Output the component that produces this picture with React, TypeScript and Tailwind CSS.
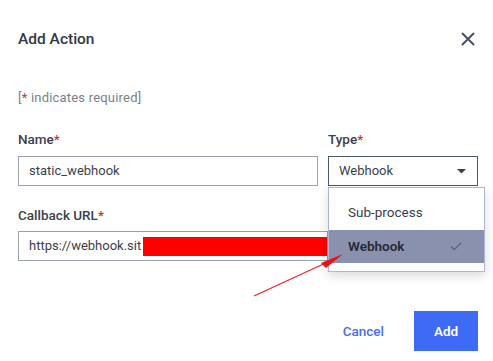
import React from "react";

export default function App() {
  const font = { fontFamily: "Roboto, 'Noto Sans', sans-serif" };
  return (
    <div className="relative w-[493px] h-[361px] bg-white overflow-hidden" style={font}>
      <div className="flex flex-col pl-[18px] pr-[15px] pt-[28px]">
        <div className="flex items-center justify-between h-[22px]">
          <div className="text-[15.5px] font-medium text-[#343846] leading-[22px]">Add Action</div>
          <svg width="14" height="14" viewBox="0 0 14 14" className="mr-[3px]">
            <path d="M1.5 1.5 L12.5 12.5 M12.5 1.5 L1.5 12.5" stroke="#4a5068" strokeWidth="2" strokeLinecap="round" />
          </svg>
        </div>
        <div className="mt-[39px] text-[13px] leading-[18px] text-[#7b7f8a] tracking-[0.2px]">
          [<span className="text-[#c0392b]">*</span> indicates required]
        </div>
        <div className="mt-[23px] flex gap-[10px]">
          <div className="flex flex-col w-[300px] shrink-0">
            <div className="text-[13.5px] font-medium leading-[18px] text-[#3b3f4c]">
              Name<span className="text-[#c0392b]">*</span>
            </div>
            <div className="mt-[8px] h-[30px] border border-[#9aa0ad] flex items-center pl-[10px] text-[13px] text-[#3b3f4c]">
              static_webhook
            </div>
          </div>
          <div className="flex flex-col w-[150px] shrink-0">
            <div className="text-[13.5px] font-medium leading-[18px] text-[#3b3f4c]">
              Type<span className="text-[#c0392b]">*</span>
            </div>
            <div className="mt-[8px] h-[30px] border border-[#4d5675] flex items-center justify-between pl-[10px] pr-[11px] text-[13px] text-[#3b3f4c]">
              <span>Webhook</span>
              <svg width="9" height="5" viewBox="0 0 9 5">
                <path d="M0 0 L9 0 L4.5 4.5 Z" fill="#3b3f4c" />
              </svg>
            </div>
          </div>
        </div>
        <div className="mt-[20px] text-[13.5px] font-medium leading-[18px] text-[#3b3f4c]">
          Callback URL<span className="text-[#c0392b]">*</span>
        </div>
        <div className="mt-[7px] w-[310px] h-[30px] border border-[#9aa0ad] flex items-center pl-[10px] text-[13px] text-[#3b3f4c]">
          <span>https://webhook.sit</span>
          <div className="ml-[2px] h-[19px] w-[185px] bg-[#ff0000]" />
        </div>
        <div className="mt-[50px] flex items-center justify-end gap-[30px]">
          <button className="text-[13.5px] font-medium text-[#4a6cf0]">Cancel</button>
          <button className="w-[64px] h-[40px] bg-[#3f6af5] text-white text-[13.5px] font-semibold">Add</button>
        </div>
      </div>

      <div className="absolute left-[328px] top-[187px] w-[157px] h-[85px] bg-white border border-[#aab6d6] shadow-[0_4px_10px_rgba(0,0,0,0.15)] flex flex-col">
        <div className="h-[42px] flex items-center pt-[6px] pl-[19px] text-[13.5px] text-[#3b3f4c]">Sub-process</div>
        <div className="h-[33px] bg-[#8a91ae] flex items-center justify-between pl-[19px] pr-[22px] text-[13.5px] font-semibold text-[#262a36]">
          <span>Webhook</span>
          <svg width="12" height="9" viewBox="0 0 12 9">
            <path d="M1 4.5 L4.2 7.7 L11 1" stroke="#5a6078" strokeWidth="1.2" fill="none" />
          </svg>
        </div>
      </div>

      <svg className="absolute left-0 top-0 pointer-events-none" width="493" height="361" viewBox="0 0 493 361">
        <line x1="254" y1="296" x2="330" y2="261" stroke="#ee2222" strokeWidth="1.2" />
        <polygon points="343,254 321,263 326,268" fill="#ee1111" />
      </svg>
    </div>
  );
}
